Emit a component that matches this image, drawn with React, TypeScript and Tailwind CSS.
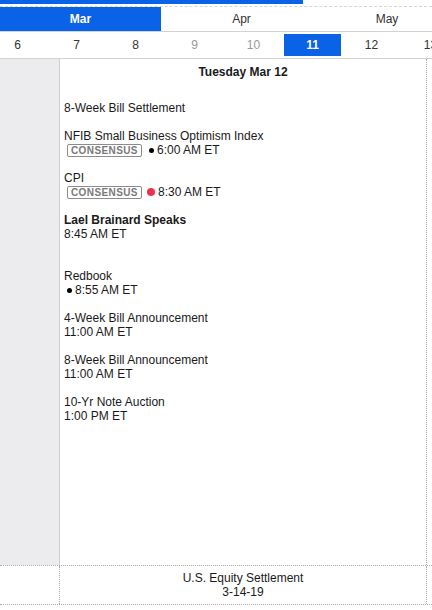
import React from "react";

type Ev = {
  title: string;
  bold?: boolean;
  badge?: boolean;
  dot?: "black" | "red";
  time?: string;
  extra?: boolean;
};

const events: Ev[] = [
  { title: "8-Week Bill Settlement" },
  { title: "NFIB Small Business Optimism Index", badge: true, dot: "black", time: "6:00 AM ET" },
  { title: "CPI", badge: true, dot: "red", time: "8:30 AM ET" },
  { title: "Lael Brainard Speaks", bold: true, time: "8:45 AM ET", extra: true },
  { title: "Redbook", dot: "black", time: "8:55 AM ET" },
  { title: "4-Week Bill Announcement", time: "11:00 AM ET" },
  { title: "8-Week Bill Announcement", time: "11:00 AM ET" },
  { title: "10-Yr Note Auction", time: "1:00 PM ET" },
];

const days = [
  { d: "6" },
  { d: "7" },
  { d: "8" },
  { d: "9", muted: true },
  { d: "10", muted: true },
  { d: "11", active: true },
  { d: "12" },
  { d: "13" },
];

function EventRow({ ev }: { ev: Ev }) {
  return (
    <div className={ev.extra ? "mb-[28px]" : "mb-[14px]"}>
      <div className={`h-[14px] leading-[14px] ${ev.bold ? "font-bold" : ""}`}>{ev.title}</div>
      {ev.time && (
        <div className="h-[14px] leading-[14px] flex items-center">
          {ev.badge && (
            <span className="ml-[3px] mr-[4px] h-[13px] px-[3px] border border-[#8c8c8c] rounded-[2px] text-[10px] leading-[11px] font-bold tracking-[0.4px] text-[#7a7a7a]">
              CONSENSUS
            </span>
          )}
          {ev.dot && (
            <span
              className={`inline-block rounded-full mr-[3px] ${
                ev.dot === "red" ? "w-[8px] h-[8px] bg-[#f0314f] ml-[1px]" : "w-[5px] h-[5px] bg-black ml-[3px]"
              }`}
            />
          )}
          <span>{ev.time}</span>
        </div>
      )}
    </div>
  );
}

export default function App() {
  return (
    <div className="w-[432px] h-[610px] overflow-hidden bg-white text-[#1a1a1a] text-[12px] font-['Liberation_Sans',Arial,sans-serif]">
      {/* scroll indicator */}
      <div className="h-[4px] w-[303px] bg-[#0a62e6]" />
      <div className="h-[2px]" />

      {/* months */}
      <div className="flex h-[25px] border-t border-dashed border-[#d4d8d4] overflow-hidden">
        <div className="w-[161px] shrink-0 bg-[#0a62e6] text-white font-bold flex items-center justify-center">Mar</div>
        <div className="w-[161px] shrink-0 flex items-center justify-center text-[#333]">Apr</div>
        <div className="w-[130px] shrink-0 flex items-center justify-center text-[#333]">May</div>
      </div>

      {/* days */}
      <div className="h-[28px] border-t border-b border-[#cfd4cf] overflow-hidden">
        <div className="flex h-full ml-[-12px]">
          {days.map((x) => (
            <div key={x.d} className="w-[59px] shrink-0 h-full py-[2px] px-[1px]">
              <div
                className={`h-full flex items-center justify-center ${
                  x.active ? "bg-[#0a62e6] text-white font-bold" : x.muted ? "text-[#9a9a9a]" : "text-[#333]"
                }`}
              >
                {x.d}
              </div>
            </div>
          ))}
        </div>
      </div>

      {/* body */}
      <div className="flex h-[506px]">
        <div className="w-[60px] shrink-0 bg-[#ececef] border-r border-[#cfcfd2]" />
        <div className="w-[367px] shrink-0 border-r border-dotted border-[#a9a9a9] pl-[4px] pt-[6px]">
          <div className="h-[14px] leading-[14px] text-center font-bold pr-[4px]">Tuesday Mar 12</div>
          <div className="h-[22px]" />
          {events.map((ev) => (
            <EventRow key={ev.title} ev={ev} />
          ))}
        </div>
      </div>

      {/* bottom row */}
      <div className="flex h-[40px] border-t border-b border-dotted border-[#b0a9b4]">
        <div className="w-[60px] shrink-0 border-r border-dotted border-[#b0a9b4]" />
        <div className="w-[367px] shrink-0 border-r border-dotted border-[#a9a9a9] flex flex-col items-center justify-center leading-[14px]">
          <div>U.S. Equity Settlement</div>
          <div>3-14-19</div>
        </div>
      </div>
    </div>
  );
}
